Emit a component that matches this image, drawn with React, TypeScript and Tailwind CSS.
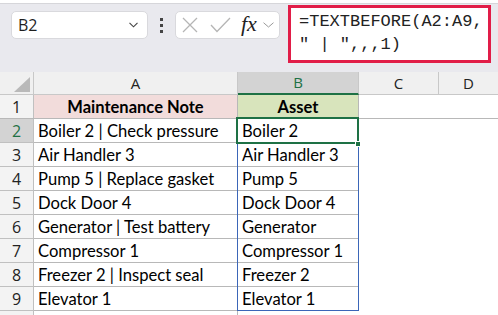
import React from "react";

const rows: [string, string][] = [
  ["Boiler 2 | Check pressure", "Boiler 2"],
  ["Air Handler 3", "Air Handler 3"],
  ["Pump 5 | Replace gasket", "Pump 5"],
  ["Dock Door 4", "Dock Door 4"],
  ["Generator | Test battery", "Generator"],
  ["Compressor 1", "Compressor 1"],
  ["Freezer 2 | Inspect seal", "Freezer 2"],
  ["Elevator 1", "Elevator 1"],
];

const cellFont = { fontFamily: "Lato, 'Liberation Sans', sans-serif" };
const uiFont = { fontFamily: "'Open Sans', 'Noto Sans', sans-serif" };

export default function App() {
  return (
    <div className="relative w-[498px] h-[315px] overflow-hidden bg-[#e9e9ee]">
      <div className="h-[4px] bg-white border-b border-[#d6d6da]" />
      {/* toolbar */}
      <div className="flex items-start h-[68px] pl-[11px]">
        <div
          className="mt-[7px] w-[137px] h-[28px] bg-white rounded-[5px] border border-[#d9d9dd] flex items-center pl-[6px] pr-[9px] justify-between"
          style={uiFont}
        >
          <span className="text-[16px] text-[#1f1f1f] leading-none">B2</span>
          <svg width="9" height="6" viewBox="0 0 9 6" fill="none">
            <path d="M0.5 0.8 L4.5 4.8 L8.5 0.8" stroke="#444" strokeWidth="1.1" />
          </svg>
        </div>
        <div className="mt-[7px] w-[27px] h-[28px] flex flex-col items-center justify-center gap-[3px]">
          <span className="w-[3px] h-[3px] bg-[#444]" />
          <span className="w-[3px] h-[3px] bg-[#444]" />
          <span className="w-[3px] h-[3px] bg-[#444]" />
        </div>
        <div className="mt-[7px] w-[105px] h-[28px] bg-white rounded-[5px] border border-[#d9d9dd] flex items-center pl-[6px]">
          <svg width="16" height="16" viewBox="0 0 16 16" fill="none">
            <path d="M1 1 L15 15 M15 1 L1 15" stroke="#b5b5b5" strokeWidth="1.3" />
          </svg>
          <svg width="21" height="16" viewBox="0 0 21 16" fill="none" className="ml-[12px]">
            <path d="M1 8 L7 14.5 L20 1" stroke="#b5b5b5" strokeWidth="1.3" />
          </svg>
          <span
            className="ml-[10px] text-[22px] italic text-[#222] leading-none -mt-[2px]"
            style={{ fontFamily: "'Liberation Serif', serif" }}
          >
            fx
          </span>
          <svg width="11" height="6" viewBox="0 0 11 6" fill="none" className="ml-[6px]">
            <path d="M0.5 0.7 L5.5 5 L10.5 0.7" stroke="#9a9a9a" strokeWidth="1" />
          </svg>
        </div>
        <div
          className="ml-[8px] mt-[1px] w-[203px] h-[58px] bg-white border-[3px] border-[#e11d48] pl-[8px] pt-[2px] text-[17px] leading-[23px] text-[#222] whitespace-pre"
          style={{ fontFamily: "'Liberation Mono', 'DejaVu Sans Mono', monospace" }}
        >
          <div>=TEXTBEFORE(A2:A9,</div>
          <div>" | ",,,1)</div>
        </div>
      </div>
      {/* grid */}
      <div className="relative bg-white">
        {/* column header */}
        <div className="flex h-[23px] bg-[#f0f0f0] border-b border-[#c8c8c8]" style={uiFont}>
          <div className="relative w-[34px] shrink-0 border-r border-[#c8c8c8]">
            <svg width="16" height="15" viewBox="0 0 16 15" className="absolute right-[3px] bottom-[2px]">
              <path d="M16 0 L16 15 L0 15 Z" fill="#b9b9b9" />
            </svg>
          </div>
          <div className="w-[204px] shrink-0 border-r border-[#c8c8c8] flex items-center justify-center text-[15px] text-[#222]">
            A
          </div>
          <div className="w-[121px] shrink-0 border-r border-[#c8c8c8] bg-[#d3d3d3] border-b-2 border-b-[#1e7145] -mb-[1px] flex items-center justify-center text-[15px] text-[#1e7145]">
            B
          </div>
          <div className="w-[80px] shrink-0 border-r border-[#c8c8c8] flex items-center justify-center text-[15px] text-[#222]">
            C
          </div>
          <div className="flex-1 flex items-center justify-center text-[15px] text-[#222]">
            D
          </div>
        </div>
        {/* row 1 */}
        <div className="flex h-[24px] border-b border-[#b8b8b8]">
          <div className="w-[34px] shrink-0 bg-[#f3f3f3] border-r border-[#c0c0c0] flex items-center justify-center text-[16px] text-[#222]" style={uiFont}>
            1
          </div>
          <div className="w-[204px] shrink-0 bg-[#f2dcdb] border-r border-[#b8b8b8] flex items-center justify-center pt-[1px] text-[16.5px] font-bold text-black" style={cellFont}>
            Maintenance Note
          </div>
          <div className="w-[121px] shrink-0 bg-[#d8e4bc] border-r border-[#b8b8b8] flex items-center justify-center pt-[1px] text-[16.5px] font-bold text-black" style={cellFont}>
            Asset
          </div>
          <div className="flex-1" />
        </div>
        {rows.map(([a, b], i) => (
          <div key={i} className="flex h-[24px]">
            <div
              className={
                i === 0
                  ? "w-[34px] shrink-0 bg-[#d3d3d3] border-r border-b border-[#c0c0c0] flex items-center justify-center text-[16px] text-[#1e7145]"
                  : "w-[34px] shrink-0 bg-[#f3f3f3] border-r border-b border-[#c0c0c0] flex items-center justify-center text-[16px] text-[#222]"
              }
              style={uiFont}
            >
              {i + 2}
            </div>
            <div className="w-[204px] shrink-0 border-r border-b border-[#b8b8b8] flex items-center pl-[4px] pt-[1px] text-[16.6px] text-black whitespace-nowrap" style={cellFont}>
              {a}
            </div>
            <div className="w-[121px] shrink-0 border-r border-b border-[#b8b8b8] flex items-center pl-[4px] pt-[1px] text-[16.6px] text-black whitespace-nowrap" style={cellFont}>
              {b}
            </div>
            <div className="w-[80px] shrink-0" />
            <div className="flex-1" />
          </div>
        ))}
        <div className="flex h-[24px]">
          <div className="w-[34px] shrink-0 bg-[#f3f3f3] border-r border-[#c0c0c0]" />
          <div className="w-[204px] shrink-0 border-r border-[#b8b8b8]" />
          <div className="w-[121px] shrink-0" />
        </div>
        {/* spill range border */}
        <div className="absolute left-[237px] top-[46px] w-[122px] h-[193px] border border-[#3b66b8] pointer-events-none" />
        {/* active cell */}
        <div className="absolute left-[236px] top-[45px] w-[123px] h-[27px] border-2 border-[#1e7145] pointer-events-none" />
        <div className="absolute left-[355px] top-[69px] w-[6px] h-[6px] bg-[#1e7145] border border-white pointer-events-none" />
      </div>
    </div>
  );
}
